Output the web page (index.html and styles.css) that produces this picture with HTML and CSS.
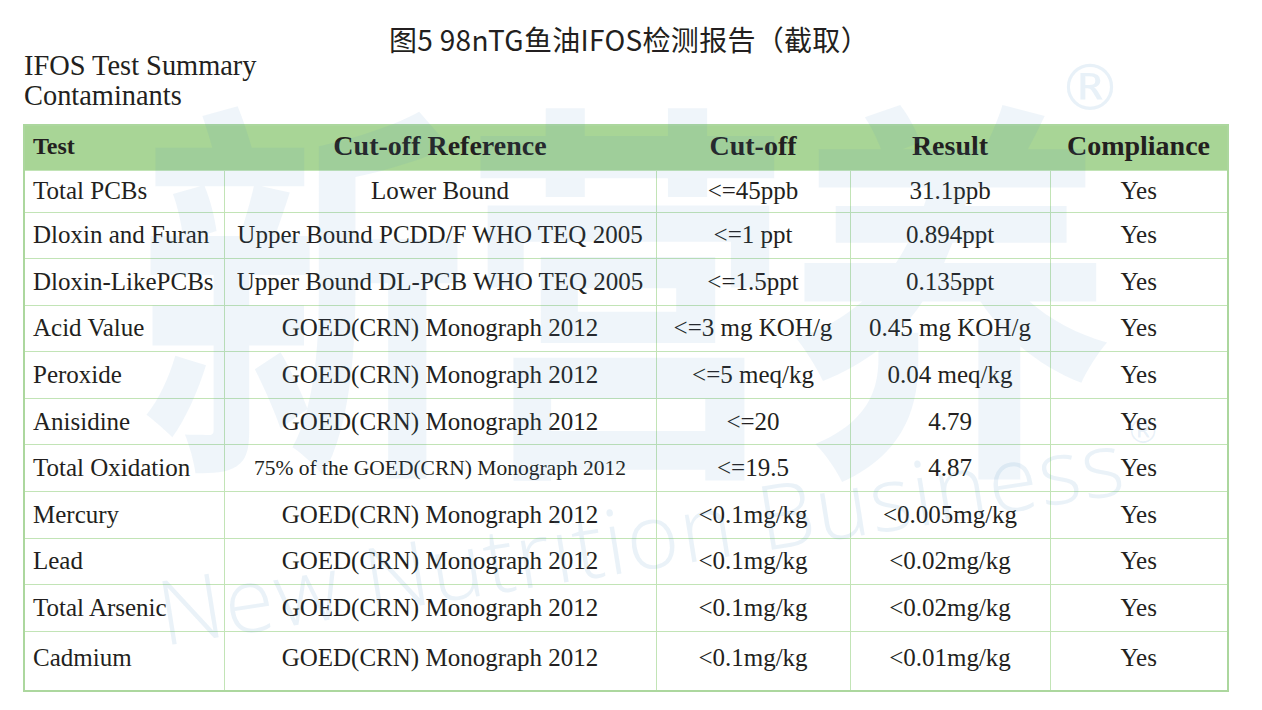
FILE: index.html
```html
<!DOCTYPE html>
<html lang="zh-CN">
<head>
<meta charset="utf-8">
<title>IFOS Test Summary</title>
<link rel="stylesheet" href="styles.css">
</head>
<body>
<div class="page">
  <div class="title">图5 98nTG鱼油IFOS检测报告（截取）</div>
  <div class="heading">
    <div>IFOS Test Summary</div>
    <div>Contaminants</div>
  </div>
  <table class="report">
    <colgroup>
      <col class="c1"><col class="c2"><col class="c3"><col class="c4"><col class="c5">
    </colgroup>
    <thead>
      <tr>
        <th class="th-test">Test</th>
        <th>Cut-off Reference</th>
        <th>Cut-off</th>
        <th>Result</th>
        <th>Compliance</th>
      </tr>
    </thead>
    <tbody>
      <tr class="first"><td>Total PCBs</td><td>Lower Bound</td><td>&lt;=45ppb</td><td>31.1ppb</td><td>Yes</td></tr>
      <tr><td>Dloxin and Furan</td><td>Upper Bound PCDD/F WHO TEQ 2005</td><td>&lt;=1 ppt</td><td>0.894ppt</td><td>Yes</td></tr>
      <tr><td>Dloxin-LikePCBs</td><td>Upper Bound DL-PCB WHO TEQ 2005</td><td>&lt;=1.5ppt</td><td>0.135ppt</td><td>Yes</td></tr>
      <tr><td>Acid Value</td><td>GOED(CRN) Monograph 2012</td><td>&lt;=3 mg KOH/g</td><td>0.45 mg KOH/g</td><td>Yes</td></tr>
      <tr><td>Peroxide</td><td>GOED(CRN) Monograph 2012</td><td>&lt;=5 meq/kg</td><td>0.04 meq/kg</td><td>Yes</td></tr>
      <tr><td>Anisidine</td><td>GOED(CRN) Monograph 2012</td><td>&lt;=20</td><td>4.79</td><td>Yes</td></tr>
      <tr><td>Total Oxidation</td><td class="small">75% of the GOED(CRN) Monograph 2012</td><td>&lt;=19.5</td><td>4.87</td><td>Yes</td></tr>
      <tr><td>Mercury</td><td>GOED(CRN) Monograph 2012</td><td>&lt;0.1mg/kg</td><td>&lt;0.005mg/kg</td><td>Yes</td></tr>
      <tr><td>Lead</td><td>GOED(CRN) Monograph 2012</td><td>&lt;0.1mg/kg</td><td>&lt;0.02mg/kg</td><td>Yes</td></tr>
      <tr><td>Total Arsenic</td><td>GOED(CRN) Monograph 2012</td><td>&lt;0.1mg/kg</td><td>&lt;0.02mg/kg</td><td>Yes</td></tr>
      <tr class="last"><td>Cadmium</td><td>GOED(CRN) Monograph 2012</td><td>&lt;0.1mg/kg</td><td>&lt;0.01mg/kg</td><td>Yes</td></tr>
    </tbody>
  </table>
  <div class="watermark" aria-hidden="true">
    <span class="wm-cn">新营养</span>
    <span class="wm-en">New Nutrition Business</span>
    <span class="wm-r wm-r1">®</span>
    <span class="wm-r wm-r2">®</span>
  </div>
</div>
</body>
</html>
```
FILE: styles.css
```css
html, body {
  margin: 0;
  padding: 0;
  background: #ffffff;
}
.page {
  position: relative;
  width: 1262px;
  height: 710px;
  overflow: hidden;
  padding: 0 0 0 23px;
  box-sizing: border-box;
  color: #231f20;
  font-family: "Liberation Serif", "Times New Roman", serif;
}
.title {
  width: 1204px;
  padding-top: 24px;
  padding-left: 8px;
  box-sizing: border-box;
  text-align: center;
  font-family: "Noto Sans CJK SC", "Noto Sans", sans-serif;
  font-size: 28px;
  line-height: 30px;
  letter-spacing: 0.3px;
  color: #231f20;
}
.heading {
  margin-top: -3px;
  padding-left: 1px;
  font-size: 28.4px;
  line-height: 30px;
}
.report {
  margin-top: 13px;
  width: 1205px;
  table-layout: fixed;
  border-collapse: collapse;
  border: 2px solid #acd79e;
}
.c1 { width: 200px; }
.c2 { width: 432px; }
.c3 { width: 194px; }
.c4 { width: 200px; }
.c5 { width: 178px; }
.report th {
  background: #a8d596;
  height: 45px;
  padding: 0 0 3px 0;
  box-sizing: border-box;
  font-size: 28px;
  font-weight: bold;
  text-align: center;
  vertical-align: middle;
}
.report th.th-test {
  text-align: left;
  padding-left: 8px;
  font-size: 24px;
}
.report td {
  height: 45.6px;
  padding: 0;
  border: 1px solid #c2e4b6;
  font-size: 25px;
  line-height: 28px;
  text-align: center;
  vertical-align: middle;
  white-space: nowrap;
}
.report td:first-child {
  text-align: left;
  padding-left: 8px;
}
.report td.small {
  font-size: 21.5px;
}
.report tr.first td {
  height: 41px;
}
.report tr.last td {
  height: 60px;
  vertical-align: top;
  padding-top: 12px;
  box-sizing: border-box;
}
.watermark {
  position: absolute;
  inset: 0;
  pointer-events: none;
}
.wm-cn {
  position: absolute;
  left: 138px;
  top: 74px;
  font-family: "Noto Sans CJK SC", sans-serif;
  font-weight: bold;
  font-size: 330px;
  line-height: 1;
  letter-spacing: -6px;
  white-space: nowrap;
  color: rgba(80, 145, 200, 0.09);
  transform-origin: 0 0;
  transform: scale(1, 1.2);
}
.wm-en {
  position: absolute;
  left: 165px;
  top: 566px;
  font-family: "Open Sans", sans-serif;
  font-weight: 300;
  font-size: 90px;
  line-height: 1;
  letter-spacing: 1.5px;
  white-space: nowrap;
  color: rgba(80, 145, 200, 0.12);
  transform-origin: 0 100%;
  transform: rotate(-9deg);
}
.wm-r {
  position: absolute;
  font-family: "DejaVu Sans", sans-serif;
  color: rgba(80, 145, 200, 0.13);
  line-height: 1;
}
.wm-r1 {
  left: 1058px;
  top: 56px;
  font-size: 64px;
}
.wm-r2 {
  left: 1126px;
  top: 414px;
  font-size: 34px;
}
```
